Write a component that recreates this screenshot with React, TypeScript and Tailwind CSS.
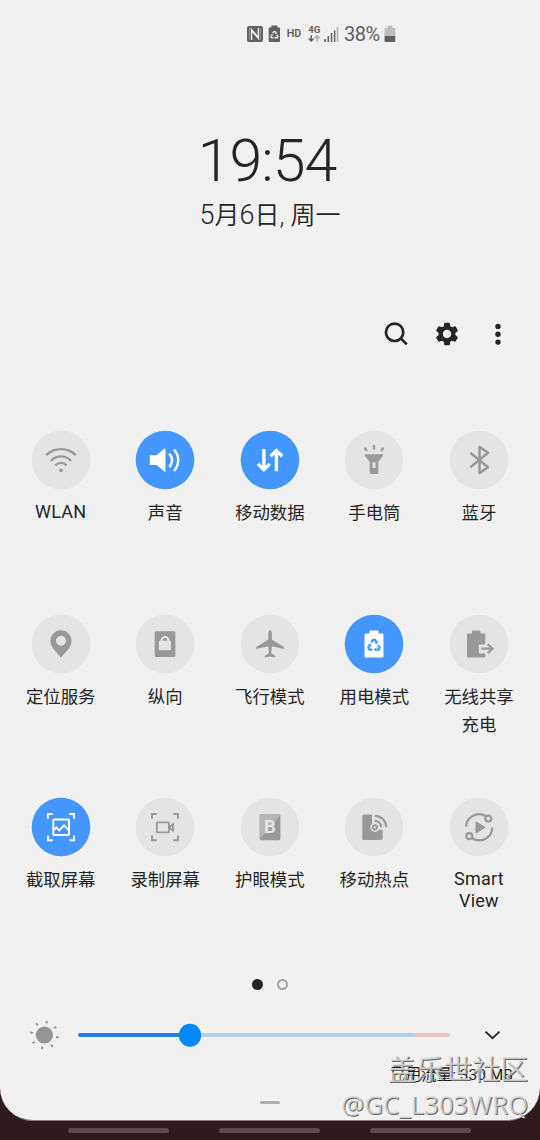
import React from "react";
import { clsx } from "clsx";
import { MdSettings } from "react-icons/md";

const BLUE = "#4397ff";
const PALE = "#e4e4e4";

interface Tile {
  label: string[];
  icon: React.ReactNode;
  on?: boolean;
}

/** Three bent arrows, centred on 0,0 */
function RecycleMark({ color }: { color: string }) {
  return (
    <g fill="none" stroke={color} strokeWidth="2" strokeLinejoin="round">
      {[0, 120, 240].map((deg) => (
        <g key={deg} transform={`rotate(${deg})`}>
          <path d="M-2.4 -2.9L-1 -5.3H1L1.8 -3.8" />
          <path d="M3.6 -4.6L0.1 -2.7L3 -1.4Z" fill={color} stroke="none" />
        </g>
      ))}
    </g>
  );
}

function Brackets() {
  return (
    <path
      d="M-13 -8.3V-13H-8.3M8.3 -13H13V-8.3M13 8.6V13.3H8.3M-8.3 13.3H-13V8.6"
      fill="none"
      stroke="currentColor"
      strokeWidth="1.9"
    />
  );
}

const WlanIcon = (
  <g fill="none" stroke="currentColor" strokeWidth="2.3">
    <path d="M-14.8 -4.9A21.3 21.3 0 0 1 14.8 -4.9" />
    <path d="M-10.1 0.9A13.6 13.6 0 0 1 10.1 0.9" />
    <path d="M-5.6 5.4A7.4 7.4 0 0 1 5.6 5.4" />
    <circle cy="10.3" r="1.9" fill="currentColor" stroke="none" />
  </g>
);

const SoundIcon = (
  <g>
    <path d="M-15.2 -4.8H-8.4L-0.6 -11.4Q0.5 -11.8 0.5 -10.8V11.2Q0.5 12.2 -0.6 11.6L-8.4 5H-15.2Z" fill="currentColor" />
    <path d="M4.2 -6.4A9 9 0 0 1 4.2 6.8M9 -10.4A15.6 15.6 0 0 1 9 10.9" fill="none" stroke="currentColor" strokeWidth="2.4" />
  </g>
);

const DataIcon = (
  <path
    d="M-6.1 -11V9.6M-12 3.9L-6.1 9.7L-0.3 3.9M6.4 11.3V-9.3M0.6 -3.7L6.4 -9.4L12.2 -3.7"
    fill="none"
    stroke="currentColor"
    strokeWidth="3.3"
  />
);

const TorchIcon = (
  <g>
    <path d="M-9.2 -5.7H9V-4.2L4.3 2V12.6Q4.3 14.1 2.8 14.1H-2.8Q-4.3 14.1 -4.3 12.6V2L-9.2 -4.2Z" fill="currentColor" />
    <rect x="-1.5" y="2.4" width="3" height="5.6" fill={PALE} />
    <path d="M0 -15V-10.6M-9.4 -12.3L-7.1 -9M9.4 -12.3L7.1 -9" stroke="currentColor" strokeWidth="2.3" />
  </g>
);

const BluetoothIcon = (
  <path
    d="M-8.7 -7.2L9 7.2L0.5 13V-13L9 -7.2L-8.7 7.4"
    fill="none"
    stroke="currentColor"
    strokeWidth="2.5"
    strokeLinejoin="round"
  />
);

const PinIcon = (
  <path
    fillRule="evenodd"
    fill="currentColor"
    d="M0 13.5C-3 9.6 -10.6 3.5 -10.6 -3.1A10.6 10.6 0 0 1 10.6 -3.1C10.6 3.5 3 9.6 0 13.5ZM0 -8.3A5 5 0 1 0 0 1.7A5 5 0 1 0 0 -8.3Z"
  />
);

const RotateLockIcon = (
  <g>
    <rect x="-10.3" y="-12.8" width="20.7" height="25.8" rx="1.6" fill="currentColor" />
    <rect x="-6.1" y="-3.2" width="12.1" height="9.4" rx="0.6" fill={PALE} />
    <path d="M-3.4 -2.6V-3.6A3.4 3.4 0 0 1 3.4 -3.6V-2.6" fill="none" stroke={PALE} strokeWidth="2.2" />
  </g>
);

const PlaneIcon = (
  <path
    fill="currentColor"
    d="M0.1 -13.8C1.4 -13.8 1.9 -12 1.9 -10.5V-4.4L13.2 2.4Q14.3 3.2 14.2 5L1.9 2.3L1.3 9.3L5.4 12V13.6L0.1 12.6L-5.2 13.6V12L-1.1 9.3L-1.7 2.3L-14 5Q-14.1 3.2 -13 2.4L-1.7 -4.4V-10.5C-1.7 -12 -1.2 -13.8 0.1 -13.8Z"
  />
);

const PowerModeIcon = (
  <g>
    <path d="M-8.4 -10.4H-4.6V-12.6Q-4.6 -13.4 -3.8 -13.4H3.7Q4.5 -13.4 4.5 -12.6V-10.4H8.4Q9.5 -10.4 9.5 -9.3V12.2Q9.5 13.4 8.4 13.4H-8.4Q-9.5 13.4 -9.5 12.2V-9.3Q-9.5 -10.4 -8.4 -10.4Z" fill="currentColor" />
    <g transform="translate(0 1.7) scale(1.12)">
      <RecycleMark color={BLUE} />
    </g>
  </g>
);

const PowerShareIcon = (
  <g>
    <path d="M-10.9 -10.4H-7V-12.6Q-7 -13.4 -6.2 -13.4H0.7Q1.5 -13.4 1.5 -12.6V-10.4H5.2Q6.3 -10.4 6.3 -9.3V0.4H0.6Q-0.2 0.4 -0.2 1.2V8.6Q-0.2 9.4 0.6 9.4H6.3V12.2Q6.3 13.4 5.2 13.4H-10.9Q-12 13.4 -12 12.2V-9.3Q-12 -10.4 -10.9 -10.4Z" fill="currentColor" />
    <path d="M2.4 4.7H13M8.7 0.2L13.4 4.7L8.7 9.2" fill="none" stroke="currentColor" strokeWidth="2.2" />
  </g>
);

const CaptureIcon = (
  <g fill="none" stroke="currentColor" strokeWidth="2">
    <Brackets />
    <rect x="-7.7" y="-7.5" width="15.7" height="15.5" rx="1" />
    <path d="M-7.5 3.3L-4.6 0.4L-1.8 3.4L3.1 -1.6L8 3.3" strokeWidth="1.8" />
  </g>
);

const RecordIcon = (
  <g fill="none" stroke="currentColor" strokeWidth="1.8">
    <Brackets />
    <rect x="-8.2" y="-4.6" width="12.2" height="10" rx="0.8" />
    <path d="M4.3 0.3L8 -2.9V3.7Z" />
  </g>
);

const EyeComfortIcon = (
  <g>
    <rect x="-10.3" y="-13" width="20.7" height="26.2" rx="1.6" fill="currentColor" />
    <path d="M-8.7 -13H9L10.2 -11.8L-10.3 12V-11.4Q-10.3 -13 -8.7 -13Z" fill="#b5b5b5" />
    <text x="0" y="6.1" textAnchor="middle" fontSize="18.5" className="font-['Roboto',sans-serif] font-bold" fill={PALE}>
      B
    </text>
  </g>
);

const HotspotIcon = (
  <g>
    <path d="M-10.3 -12.5H-2V-2.4A4.6 4.6 0 0 0 3.4 4.1L5 2.7H8.6V11.7Q8.6 13.1 7.2 13.1H-10.3Q-11.7 13.1 -11.7 11.7V-11.1Q-11.7 -12.5 -10.3 -12.5Z" fill="currentColor" />
    <circle cx="0.9" cy="0.3" r="4.6" fill={PALE} />
    <g fill="none" stroke="currentColor" strokeWidth="2.2">
      <circle cx="0.9" cy="0.3" r="2.1" strokeWidth="2" />
      <path d="M0.7 -6.1A6.5 6.5 0 0 1 7.4 0.3M0.7 -11.2A11.3 11.3 0 0 1 12.2 0.3" />
    </g>
  </g>
);

const SmartViewIcon = (
  <g fill="none" stroke="currentColor" strokeWidth="2.2">
    <path d="M-12.9 -0.4A13 13 0 0 1 6.9 -10.9M13.3 0.6A13 13 0 0 1 -7.1 11" />
    <circle cx="9.3" cy="-8.4" r="3" />
    <circle cx="-9.7" cy="9.1" r="3" />
    <path d="M-3 -5.2L6 0.4L-3 6Z" fill="currentColor" strokeWidth="1" strokeLinejoin="round" />
  </g>
);

const ROWS: Tile[][] = [
  [
    { label: ["WLAN"], icon: WlanIcon },
    { label: ["声音"], icon: SoundIcon, on: true },
    { label: ["移动数据"], icon: DataIcon, on: true },
    { label: ["手电筒"], icon: TorchIcon },
    { label: ["蓝牙"], icon: BluetoothIcon },
  ],
  [
    { label: ["定位服务"], icon: PinIcon },
    { label: ["纵向"], icon: RotateLockIcon },
    { label: ["飞行模式"], icon: PlaneIcon },
    { label: ["用电模式"], icon: PowerModeIcon, on: true },
    { label: ["无线共享", "充电"], icon: PowerShareIcon },
  ],
  [
    { label: ["截取屏幕"], icon: CaptureIcon, on: true },
    { label: ["录制屏幕"], icon: RecordIcon },
    { label: ["护眼模式"], icon: EyeComfortIcon },
    { label: ["移动热点"], icon: HotspotIcon },
    { label: ["Smart", "View"], icon: SmartViewIcon },
  ],
];

function QuickTile({ label, icon, on }: Tile) {
  const latin = /^[A-Za-z]/.test(label[0]);
  return (
    <button type="button" className="flex flex-col items-center">
      <svg
        width="60"
        height="60"
        viewBox="-30 -30 60 60"
        className={on ? "text-white" : "text-[#999999]"}
        aria-hidden
      >
        <circle r="29.3" fill={on ? BLUE : PALE} />
        {icon}
      </svg>
      <span
        className={clsx(
          "flex flex-col whitespace-nowrap text-[#252525]",
          latin ? "mt-[11px] text-[18px] leading-[22px] tracking-[0.2px]" : "mt-[9px] text-[17.4px] leading-[28px]"
        )}
      >
        {label.map((line) => (
          <span key={line}>{line}</span>
        ))}
      </span>
    </button>
  );
}

function StatusBar() {
  return (
    <div className="flex h-[67px] items-center pl-[246px] text-[#606060]">
      <svg width="96" height="20" viewBox="246 23 96 20" aria-hidden>
        {/* NFC */}
        <rect x="247" y="25" width="16" height="16" rx="2" fill="currentColor" />
        <path d="M251.6 39V28.6L257.6 35.6M258.4 27V37.4L252.4 30.4" fill="none" stroke="#f1f1f1" strokeWidth="1.4" />
        <path d="M251 27.2H249.4V38.8M259 38.8H260.7V27.2" fill="none" stroke="#a8a8a8" strokeWidth="0.8" />
        {/* Power saving */}
        <path d="M270 26.6H271.3V24.6H277.4V26.6H279Q280 26.6 280 27.6V40Q280 41 279 41H269.7Q268.7 41 268.7 40V27.6Q268.7 26.6 269.7 26.6Z" fill="currentColor" />
        <g transform="translate(274.4 34.3) scale(0.7)">
          <RecycleMark color="#f1f1f1" />
        </g>
        <text x="286.8" y="36" fontSize="10.6" fill="currentColor" className="font-['Roboto',sans-serif] font-semibold">HD</text>
        <text x="308.2" y="32" fontSize="9.6" fill="currentColor" className="font-['Roboto',sans-serif] font-bold">4G</text>
        <path d="M311.2 34.2V39.5M308.7 37.5L311.2 40L313.7 37.5" fill="none" stroke="currentColor" strokeWidth="1.5" />
        <path d="M317.2 40.6V35M314.7 37.3L317.2 34.8L319.7 37.3" fill="none" stroke="#ababab" strokeWidth="1.5" />
        <path d="M325 41V38M328.3 41V35M331.5 41V32M334.6 41V29.5" stroke="currentColor" strokeWidth="1.5" />
        <path d="M337.5 41V26" stroke="#b8b8b8" strokeWidth="1.7" />
      </svg>
      <span className="ml-[2px] w-[40px] text-[20px] leading-5 tracking-[-0.5px]">38%</span>
      <svg width="12" height="18" viewBox="0 0 12 18" aria-hidden>
        <path d="M1.5 3H3.5V0.8H8.5V3H10.5Q11.3 3 11.3 4V11H0.5V4Q0.5 3 1.5 3Z" fill="#bcbcbc" />
        <path d="M0.5 11H11.3V16Q11.3 17 10.3 17H1.5Q0.5 17 0.5 16Z" fill="currentColor" />
      </svg>
    </div>
  );
}

function Toolbar() {
  return (
    <div className="flex h-7 items-center justify-end gap-[23px] pr-[38px] text-[#252525]">
      <button type="button" aria-label="搜索">
        <svg width="28" height="28" viewBox="0 0 28 28" fill="none" stroke="currentColor" strokeWidth="2.7">
          <circle cx="12.6" cy="12.3" r="8.7" />
          <path d="M18.8 18.4L24.8 24.4" />
        </svg>
      </button>
      <button type="button" aria-label="设置">
        <MdSettings size={28} />
      </button>
      <button type="button" aria-label="更多" className="ml-[6px]">
        <svg width="12" height="28" viewBox="0 0 12 28" fill="currentColor">
          <circle cx="8" cy="6.4" r="2.7" />
          <circle cx="8" cy="14.3" r="2.7" />
          <circle cx="8" cy="22.1" r="2.7" />
        </svg>
      </button>
    </div>
  );
}

function Brightness() {
  return (
    <div className="flex h-8 items-center pl-[28px]">
      <svg width="32" height="32" viewBox="-16 -16 32 32" className="text-[#949494]" aria-hidden>
        <circle cx="0.4" r="8.6" fill="currentColor" />
        {[10, 55, 100, 145, 190, 235, 280, 325].map((deg) => (
          <path key={deg} d="M0 -14.4V-11.8" stroke="currentColor" strokeWidth="2" transform={`translate(0.4 0) rotate(${deg})`} />
        ))}
      </svg>
      <div className="relative ml-[17.5px] flex h-1 w-[372px] overflow-visible rounded-full">
        <div className="w-[112px] rounded-l-full bg-[#1a84dc]" />
        <div className="flex-1 bg-[#b0d0ea]" />
        <div className="w-9 rounded-r-full bg-[#edc2c2]" />
        <div className="absolute top-1/2 left-[101.2px] size-[22.6px] -translate-y-1/2 rounded-full bg-[#0088ff]" />
      </div>
      <svg width="18" height="12" viewBox="0 0 18 12" className="ml-[33px]" aria-hidden>
        <path d="M2.5 2.6L9.5 9.2L16.5 2.6" fill="none" stroke="#252525" strokeWidth="1.8" />
      </svg>
    </div>
  );
}

export default function App() {
  return (
    <div className="relative h-[1140px] w-[540px] overflow-hidden bg-[#2f1b1e] font-['Roboto','Noto_Sans_CJK_SC',sans-serif]">
      <main className="h-[1121px] rounded-b-[33px] border-b border-[#8d8284] bg-[#f1f1f1]">
        <StatusBar />

        <header className="flex h-[253px] flex-col items-center pt-[59px] text-[#252525]">
          <div className="-ml-[6px] text-[59px] leading-[70px] font-light tracking-[-1px]">19:54</div>
          <div className="mt-[3px] text-[25px] leading-8 font-[350] whitespace-nowrap">
            <span className="text-[27px] font-light">5</span>月<span className="text-[27px] font-light">6</span>日, 周一
          </div>
        </header>

        <Toolbar />

        <div className="mt-[82px] flex flex-col pr-[8.8px] pl-[8.4px]">
          {ROWS.map((row, i) => (
            <div key={i} className="grid h-[183.6px] grid-cols-5 items-start">
              {row.map((tile) => (
                <QuickTile key={tile.label.join("")} {...tile} />
              ))}
            </div>
          ))}
        </div>

        <div className="flex h-[11px] items-center justify-center gap-[14px] -mt-[1.8px]">
          <span className="size-[11px] rounded-full bg-[#252525]" />
          <span className="size-[11px] rounded-full border-2 border-[#a2a2a2]" />
        </div>

        <div className="mt-[29px]">
          <Brightness />
        </div>

        <div className="mt-[12px] flex h-6 justify-end pr-[27px] text-[15.5px] leading-6 text-[#1c1c1c]">已用流量: 330 MB</div>
        <div className="mx-auto mt-[14px] h-[3px] w-5 rounded-full bg-[#b0b0b0]" />
      </main>

      <nav className="flex justify-center gap-[50px] pt-[7px] pr-px">
        <span className="h-[5px] w-[101px] rounded-full bg-[#5e494b]" />
        <span className="h-[5px] w-[101px] rounded-full bg-[#5e494b]" />
        <span className="h-[5px] w-[101px] rounded-full bg-[#5e494b]" />
      </nav>

      {/* Community stamp over the lower right corner */}
      <div className="absolute right-[12px] bottom-[17px] flex flex-col items-end whitespace-nowrap text-[#dcdcdc]/80 [text-shadow:1px_1px_0_rgba(70,70,70,0.8)]">
        <span className="text-[28px] leading-[32px]">盖乐世社区</span>
        <span className="font-['Noto_Sans',sans-serif] text-[25.7px] leading-[36px]">@GC_L303WRQ</span>
      </div>
    </div>
  );
}
